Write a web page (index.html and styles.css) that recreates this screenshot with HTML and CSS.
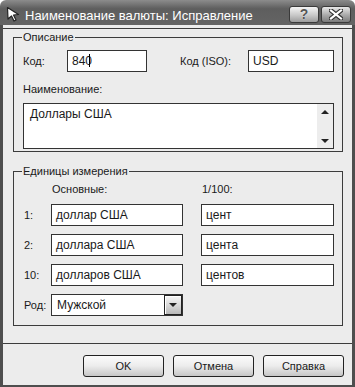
FILE: index.html
```html
<!DOCTYPE html>
<html lang="ru">
<head>
    <meta charset="UTF-8">
    <title>Наименование валюты: Исправление</title>
    <link rel="stylesheet" href="styles.css">
</head>
<body>
    <div class="window">
        <div class="titlebar">
            <svg class="title-icon" width="14" height="16" viewBox="0 0 14 16">
                <polygon points="1.5,1.5 12.5,8.5 7.5,9 10,14 8,15 5.5,10 2,13" fill="#fff" stroke="#222" stroke-width="1.2" stroke-linejoin="round"/>
            </svg>
            <span class="title">Наименование валюты: Исправление</span>
            <div class="title-buttons">
                <span class="tbtn help">?</span>
                <span class="tbtn close">
                    <svg width="14" height="11" viewBox="0 0 14 11">
                        <path d="M2,1.5 L12,9.5 M12,1.5 L2,9.5" stroke="#333" stroke-width="4.4" stroke-linecap="square"/>
                        <path d="M2,1.5 L12,9.5 M12,1.5 L2,9.5" stroke="#fff" stroke-width="2.2" stroke-linecap="square"/>
                    </svg>
                </span>
            </div>
        </div>
        <div class="frame">
            <div class="panel">
                <fieldset class="group group-desc">
                    <legend>Описание</legend>
                    <div class="code-row">
                        <span class="lbl lbl-code">Код:</span>
                        <div class="field field-code">840<span class="caret"></span></div>
                        <span class="lbl lbl-iso">Код (ISO):</span>
                        <div class="field field-iso">USD</div>
                    </div>
                    <div class="name-label">Наименование:</div>
                    <div class="memo">
                        <div class="memo-text">Доллары США</div>
                        <div class="scrollbar">
                            <span class="arrow-up"></span>
                            <span class="arrow-down"></span>
                        </div>
                    </div>
                </fieldset>

                <fieldset class="group group-units">
                    <legend>Единицы измерения</legend>
                    <div class="units">
                        <span></span>
                        <span class="colhead">Основные:</span>
                        <span class="colhead col2">1/100:</span>

                        <span class="lbl">1:</span>
                        <div class="field">доллар США</div>
                        <div class="field col2">цент</div>

                        <span class="lbl">2:</span>
                        <div class="field">доллара США</div>
                        <div class="field col2">цента</div>

                        <span class="lbl">10:</span>
                        <div class="field">долларов США</div>
                        <div class="field col2">центов</div>

                        <span class="lbl">Род:</span>
                        <div class="field select">
                            <span class="select-text">Мужской</span>
                            <span class="drop"><span class="arrow-down"></span></span>
                        </div>
                    </div>
                </fieldset>
            </div>
            <div class="buttons">
                <button class="btn">OK</button>
                <button class="btn">Отмена</button>
                <button class="btn">Справка</button>
            </div>
        </div>
    </div>
</body>
</html>
```

FILE: styles.css
```css
body {
    margin: 0;
    font-family: "Liberation Sans", Arial, sans-serif;
    font-size: 11px;
    color: #1a1a1a;
    background: #fff;
}
.window {
    width: 355px;
    height: 387px;
    display: flex;
    flex-direction: column;
}
.titlebar {
    height: 25px;
    display: flex;
    align-items: center;
    padding: 0 4px 0 6px;
    background: linear-gradient(#8c8c8c, #5e5e5e 35%, #646464);
    border-radius: 6px 6px 0 0;
    color: #fff;
}
.title-icon {
    margin-right: 5px;
    margin-top: 3px;
}
.title {
    flex: 1;
    font-size: 13px;
    padding-top: 5px;
}
.title-buttons {
    display: flex;
    gap: 2px;
    margin-top: 3px;
}
.tbtn {
    width: 30px;
    height: 17px;
    box-sizing: border-box;
    border: 1px solid #3a3a3a;
    border-radius: 3px;
    background: linear-gradient(#f4f4f4, #c8c8c8 55%, #9c9c9c);
    display: flex;
    align-items: center;
    justify-content: center;
}
.help {
    color: #555;
    font-weight: bold;
    font-size: 14px;
    text-shadow: 0 0 1px #fff;
}
.close {
    background: linear-gradient(#e8e8e8, #a8a8a8 55%, #7c7c7c);
}
.frame {
    flex: 1;
    display: flex;
    flex-direction: column;
    background: #ececec;
    border: solid #4e4e4e;
    border-width: 0 3px 2px 3px;
}
.panel {
    margin-top: 3px;
    padding: 0 9px 0 10px;
    height: 314px;
    border-top: 1px solid #3c3c3c;
    border-bottom: 1px solid #3c3c3c;
}
.group {
    margin: 2px 0 0;
    padding: 0 8px 2px 9px;
    border: 1px solid #3c3c3c;
    min-inline-size: 0;
}
.group legend {
    padding: 0 1px;
    margin-left: -1px;
    line-height: 13px;
}
.code-row {
    display: flex;
    align-items: center;
    margin-top: 6px;
}
.lbl-code {
    width: 44px;
}
.lbl-iso {
    width: 68px;
    margin-left: 33px;
}
.field {
    height: 22px;
    box-sizing: border-box;
    border: 1px solid #333;
    background: #fff;
    padding: 0 4px;
    font-size: 12px;
    line-height: 20px;
    white-space: nowrap;
}
.field-code {
    width: 80px;
}
.field-iso {
    flex: 1;
}
.caret {
    display: inline-block;
    width: 1px;
    height: 13px;
    background: #000;
    margin-left: -3px;
    vertical-align: -2px;
}
.name-label {
    margin-top: 11px;
    line-height: 13px;
}
.memo {
    margin-top: 7px;
    height: 46px;
    box-sizing: border-box;
    display: flex;
    border: 1px solid #333;
    background: #fff;
}
.memo-text {
    flex: 1;
    padding: 3px 6px;
    font-size: 12px;
    line-height: 14px;
}
.scrollbar {
    width: 16px;
    background: #ededed;
    display: flex;
    flex-direction: column;
    justify-content: space-between;
    align-items: center;
    padding: 6px 0 5px;
    box-sizing: border-box;
}
.arrow-up {
    border: 4px solid transparent;
    border-top: 0;
    border-bottom: 4px solid #222;
}
.arrow-down {
    border: 4px solid transparent;
    border-bottom: 0;
    border-top: 4px solid #222;
}
.group-units {
    margin-top: 13px;
    padding-bottom: 9px;
}
.units {
    display: grid;
    grid-template-columns: 28px 132px 1fr;
    row-gap: 8px;
    align-items: center;
    margin-top: 5px;
}
.units .lbl {
    padding-left: 1px;
}
.colhead {
    padding-left: 1px;
    line-height: 13px;
}
.col2 {
    margin-left: 18px;
}
.select {
    display: flex;
    align-items: center;
    padding: 0 0 0 5px;
}
.select-text {
    flex: 1;
}
.drop {
    width: 18px;
    height: 20px;
    box-sizing: border-box;
    border: 1px solid #222;
    box-shadow: inset 1px 1px 0 #fff;
    background: linear-gradient(#f6f6f6, #d6d6d6 55%, #b8b8b8);
    display: flex;
    align-items: center;
    justify-content: center;
}
.buttons {
    flex: 1;
    display: flex;
    justify-content: flex-end;
    align-items: flex-start;
    gap: 9px;
    padding: 11px 8px 0 0;
}
.btn {
    width: 81px;
    height: 22px;
    border: 1px solid #222;
    border-radius: 3px;
    background: linear-gradient(#fbfbfb, #ececec 50%, #c6c6c6);
    font-family: "Liberation Sans", Arial, sans-serif;
    font-size: 11px;
    color: #1a1a1a;
    padding: 0;
}
```
